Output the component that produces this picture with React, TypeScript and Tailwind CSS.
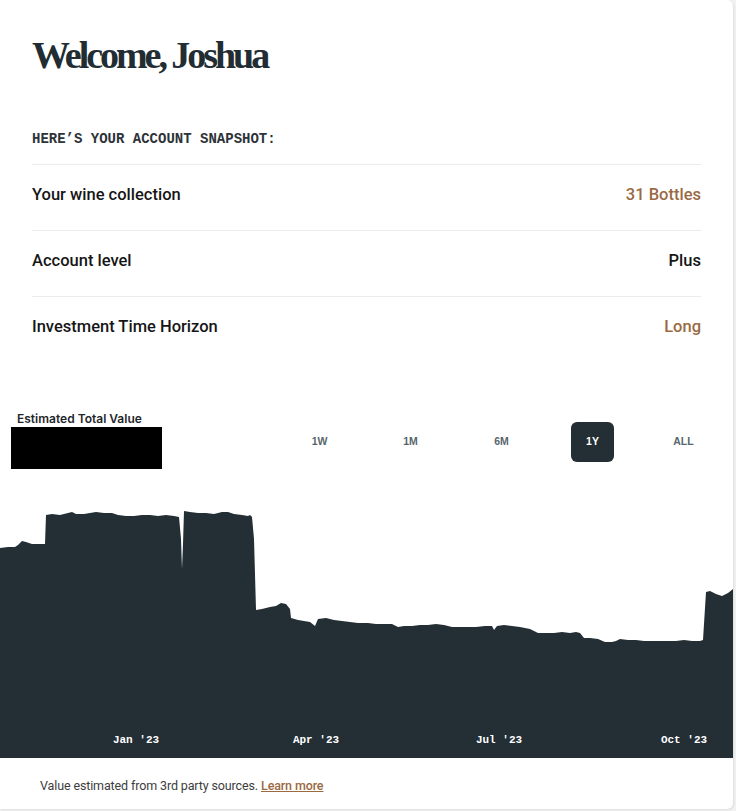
const points: [number, number][] = [
  [0, 549], [8, 548], [15, 548], [18, 546], [22, 542], [26, 543], [32, 545], [40, 545], [45, 545],
  [46, 516], [52, 515], [60, 516], [68, 514], [72, 513], [76, 515], [84, 515], [90, 514], [96, 513],
  [104, 514], [112, 514], [118, 516], [126, 517], [134, 517], [142, 516], [150, 516], [158, 517],
  [166, 516], [174, 517], [179, 518], [181, 540], [182, 570], [183, 545], [184, 512], [190, 513],
  [198, 514], [206, 514], [214, 515], [222, 513], [228, 513], [234, 515], [242, 516], [248, 517],
  [250, 516], [252, 518], [254, 540], [256, 611], [262, 610], [270, 608], [276, 607], [281, 604],
  [286, 605], [290, 610], [291, 619], [298, 621], [304, 622], [310, 623], [315, 627], [318, 620],
  [326, 619], [334, 621], [342, 622], [350, 623], [358, 624], [368, 624], [376, 625], [384, 625],
  [392, 625], [398, 628], [404, 627], [412, 627], [420, 626], [428, 626], [436, 625], [444, 626],
  [452, 628], [460, 628], [468, 628], [476, 628], [485, 627], [492, 627], [494, 631], [497, 627],
  [504, 626], [512, 627], [520, 628], [530, 630], [538, 634], [546, 634], [554, 634], [562, 633],
  [570, 634], [576, 633], [580, 634], [584, 639], [590, 639], [598, 640], [605, 643], [612, 643],
  [616, 642], [620, 640], [628, 641], [636, 641], [644, 642], [652, 642], [660, 642], [668, 642],
  [676, 642], [684, 641], [692, 642], [700, 642], [703, 641], [706, 593], [710, 592], [716, 595],
  [722, 597], [728, 594], [733, 590],
];

const CHART_TOP = 480;
const CHART_H = 279;

const areaPath =
  "M0," + CHART_H + " " +
  points.map(([x, y]) => `L${x},${y - CHART_TOP}`).join(" ") +
  ` L733,${CHART_H} Z`;

const rows = [
  { label: "Your wine collection", value: "31 Bottles", accent: true },
  { label: "Account level", value: "Plus", accent: false },
  { label: "Investment Time Horizon", value: "Long", accent: true },
];

const ranges = ["1W", "1M", "6M", "1Y", "ALL"];

const ticks = [
  { label: "Jan '23", x: 136 },
  { label: "Apr '23", x: 316 },
  { label: "Jul '23", x: 499 },
  { label: "Oct '23", x: 684 },
];

export default function App() {
  return (
    <div className="w-[736px] h-[811px] bg-[#f1f1f1] overflow-hidden">
      <div className="w-[733px] h-[809px] bg-white rounded-r-md shadow-[1px_1px_2px_rgba(0,0,0,0.08)] flex flex-col">
        {/* Greeting + snapshot */}
        <div className="px-8 pt-[35px]">
          <h1 className="font-['Liberation_Serif',serif] font-bold text-[38px] leading-[40px] tracking-[-0.08em] text-[#222d33]">
            Welcome, Joshua
          </h1>

          <p className="mt-[56px] font-['Liberation_Mono',monospace] font-bold text-[14px] leading-4 text-[#2d3338]">
            HERE&#8217;S YOUR ACCOUNT SNAPSHOT:
          </p>

          <div className="mt-[17px] font-['Roboto',sans-serif]">
            {rows.map((r) => (
              <div
                key={r.label}
                className="h-[66px] border-t border-[#ececec] flex justify-between items-start pt-[18px] text-[16.5px] font-medium"
              >
                <span className="text-[#161616]">{r.label}</span>
                <span className={r.accent ? "text-[#9a6a43]" : "text-[#161616]"}>
                  {r.value}
                </span>
              </div>
            ))}
          </div>
        </div>

        {/* Value + range selector */}
        <div className="mt-[50px] flex items-start">
          <div className="pl-[11px] w-[274px]">
            <p className="pl-[6px] font-['Inter',sans-serif] font-semibold text-[12px] leading-[14px] text-[#1f272c]">
              Estimated Total Value
            </p>
            <div className="mt-[1px] w-[151px] h-[42px] bg-black" />
          </div>
          <div className="mt-[10px] w-[455px] grid grid-cols-5 font-['Liberation_Sans',sans-serif] font-bold text-[10.5px]">
            {ranges.map((r) => (
              <div key={r} className="flex justify-center">
                <button
                  className={
                    r === "1Y"
                      ? "w-[43px] h-[40px] rounded-md bg-[#232e35] text-white"
                      : "w-[43px] h-[40px] rounded-md text-[#56666e]"
                  }
                >
                  {r}
                </button>
              </div>
            ))}
          </div>
        </div>

        {/* Chart */}
        <div className="relative mt-[10px] h-[279px]">
          <svg width="733" height="279" viewBox="0 0 733 279" className="block">
            <path d={areaPath} fill="#232e35" />
          </svg>
          {ticks.map((t) => (
            <span
              key={t.label}
              className="absolute top-[255px] -translate-x-1/2 font-['Liberation_Mono',monospace] font-bold text-[11px] leading-3 text-white whitespace-pre"
              style={{ left: t.x }}
            >
              {t.label}
            </span>
          ))}
        </div>

        {/* Footnote */}
        <p className="pl-10 pt-[19px] font-['Roboto',sans-serif] text-[12.5px] tracking-[-0.01em] text-[#3d3d3d]">
          Value estimated from 3rd party sources.{" "}
          <a className="underline text-[#9a6a43] font-medium">Learn more</a>
        </p>
      </div>
    </div>
  );
}
